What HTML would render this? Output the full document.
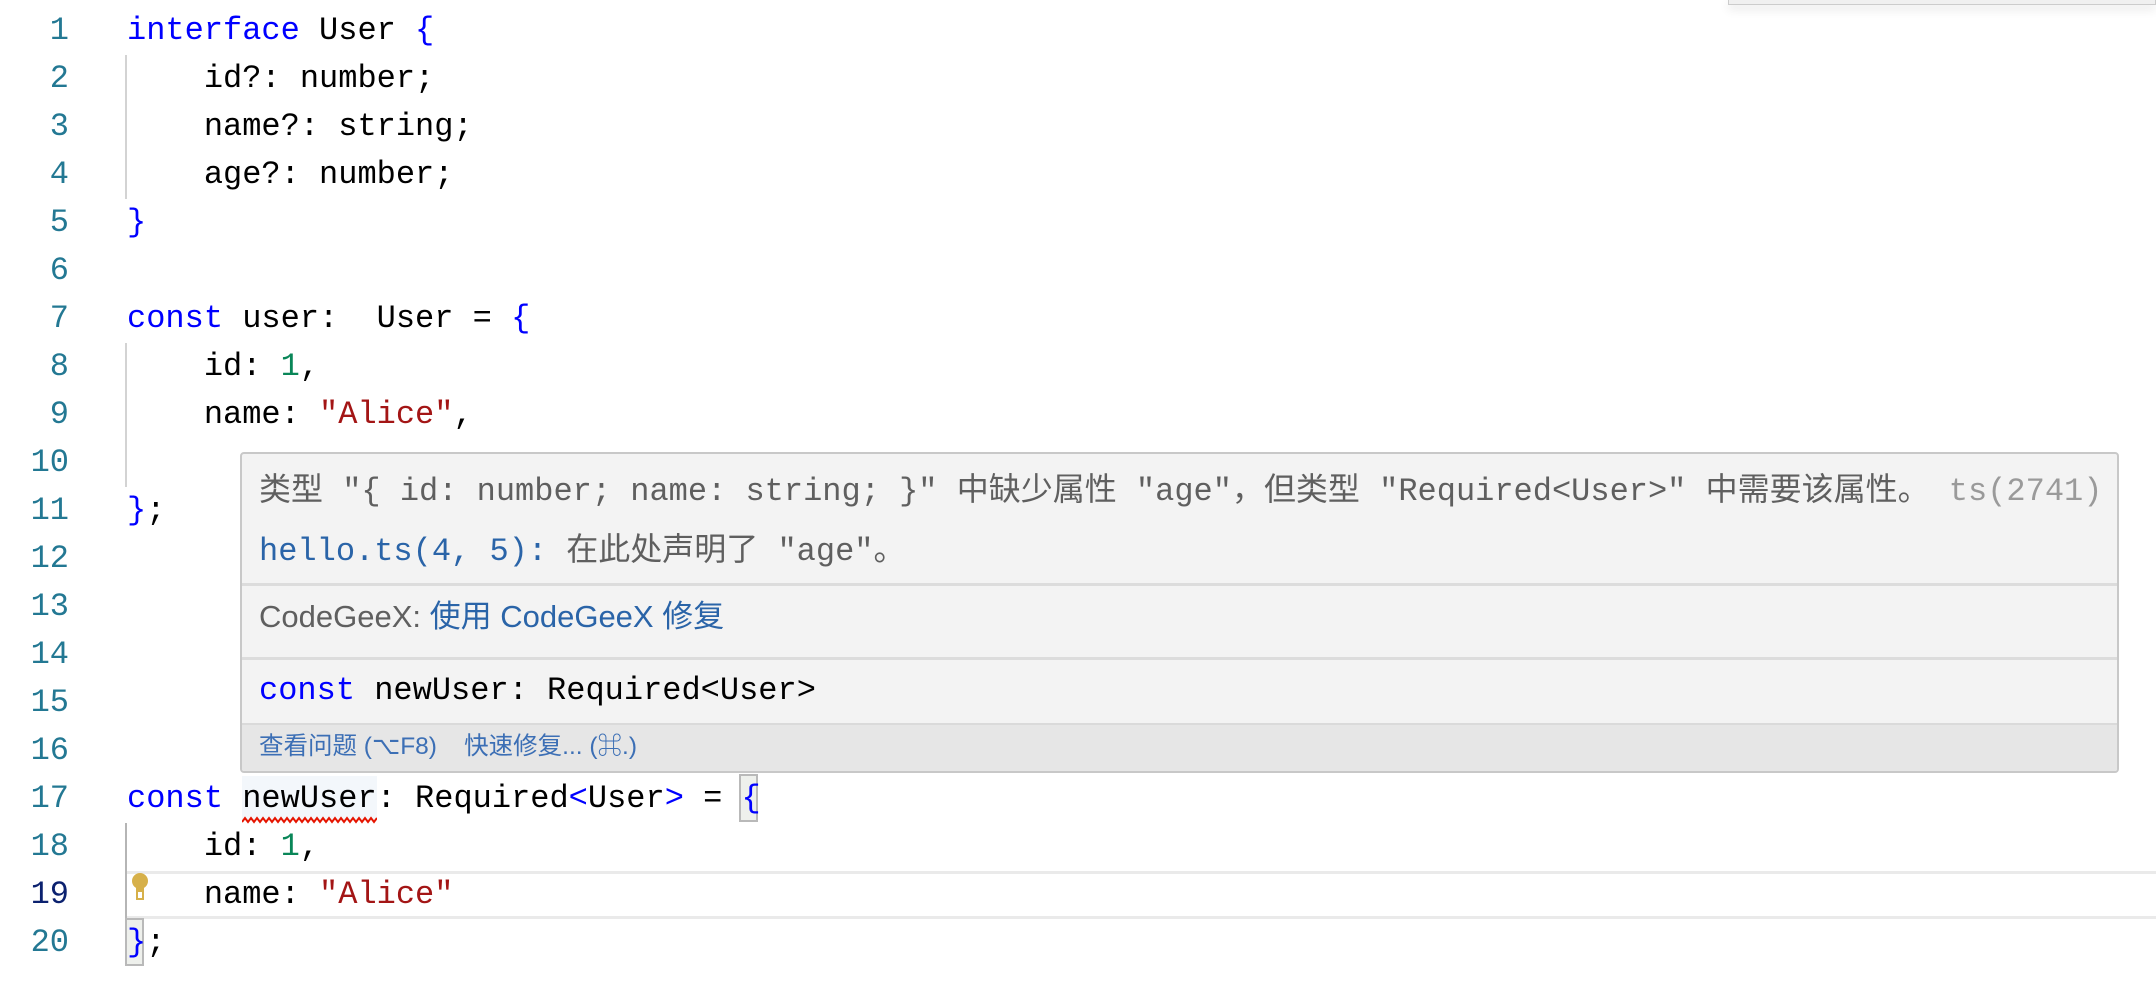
<!DOCTYPE html>
<html><head><meta charset="utf-8"><style>
*{margin:0;padding:0;box-sizing:border-box}
body{width:2156px;height:998px;background:#fff;position:relative;overflow:hidden;font-family:"Liberation Mono","Noto Sans CJK SC",monospace;font-size:32px}
.ln{position:absolute;left:0;width:69px;text-align:right;color:#237893;height:48px;line-height:48px}
.c{position:absolute;left:127px;height:48px;line-height:48px;white-space:pre;color:#000}
.k{color:#0000ff}.s{color:#a31515}.n{color:#098658}
.g{position:absolute;left:125px;width:2px;background:#d3d3d3}
.hv{position:absolute;left:240px;top:452px;width:1879px;height:321px;background:#f3f3f3;border:2px solid #c8c8c8;border-radius:4px;overflow:hidden}
.hv .r{position:absolute;left:17px;white-space:pre}
.hr{position:absolute;left:0;right:0;height:3px;background:#dcdcdc}
.sans{font-family:"Liberation Sans","Noto Sans CJK SC",sans-serif}
</style></head><body>
<div style="position:absolute;left:1728px;top:0;width:428px;height:5px;background:#f0f0f0;border:1px solid #ccc;border-top:none;box-shadow:0 4px 10px rgba(0,0,0,.12)"></div>

<div class="g" style="top:55px;height:144px"></div>
<div class="g" style="top:343px;height:144px"></div>
<div class="g" style="top:823px;height:96px;background:#b5b5b5"></div>

<div style="position:absolute;left:127px;right:0;top:871px;height:48px;border-top:3px solid #eaeaea;border-bottom:3px solid #eaeaea"></div>

<div class="ln" style="top:7px">1</div><div class="c" style="top:7px"><span class="k">interface</span> User <span class="k">{</span></div>
<div class="ln" style="top:55px">2</div><div class="c" style="top:55px">    id?: number;</div>
<div class="ln" style="top:103px">3</div><div class="c" style="top:103px">    name?: string;</div>
<div class="ln" style="top:151px">4</div><div class="c" style="top:151px">    age?: number;</div>
<div class="ln" style="top:199px">5</div><div class="c" style="top:199px"><span class="k">}</span></div>
<div class="ln" style="top:247px">6</div>
<div class="ln" style="top:295px">7</div><div class="c" style="top:295px"><span class="k">const</span> user:  User = <span class="k">{</span></div>
<div class="ln" style="top:343px">8</div><div class="c" style="top:343px">    id: <span class="n">1</span>,</div>
<div class="ln" style="top:391px">9</div><div class="c" style="top:391px">    name: <span class="s">"Alice"</span>,</div>
<div class="ln" style="top:439px">10</div>
<div class="ln" style="top:487px">11</div><div class="c" style="top:487px"><span class="k">}</span>;</div>
<div class="ln" style="top:535px">12</div>
<div class="ln" style="top:583px">13</div>
<div class="ln" style="top:631px">14</div>
<div class="ln" style="top:679px">15</div>
<div class="ln" style="top:727px">16</div>
<div style="position:absolute;left:242px;top:776px;width:135px;height:44px;background:#f3f7fb"></div>
<svg style="position:absolute;left:242px;top:816px" width="135" height="8"><polyline fill="none" stroke="#e51400" stroke-width="2" points="0,6 3,2 6,6 9,2 12,6 15,2 18,6 21,2 24,6 27,2 30,6 33,2 36,6 39,2 42,6 45,2 48,6 51,2 54,6 57,2 60,6 63,2 66,6 69,2 72,6 75,2 78,6 81,2 84,6 87,2 90,6 93,2 96,6 99,2 102,6 105,2 108,6 111,2 114,6 117,2 120,6 123,2 126,6 129,2 132,6 135,2"/></svg>
<div style="position:absolute;left:739px;top:774px;width:19px;height:48px;background:#eef0ec;border:2px solid #b9b9b9"></div>
<div style="position:absolute;left:125px;top:918px;width:19px;height:48px;background:#eef0ec;border:2px solid #b9b9b9"></div>
<div class="ln" style="top:775px">17</div><div class="c" style="top:775px"><span class="k">const</span> newUser: Required<span class="k">&lt;</span>User<span class="k">&gt;</span> = <span class="k">{</span></div>
<div class="ln" style="top:823px">18</div><div class="c" style="top:823px">    id: <span class="n">1</span>,</div>
<div class="ln" style="top:871px;color:#0b216f">19</div><div class="c" style="top:871px">    name: <span class="s">"Alice"</span></div>
<div class="ln" style="top:919px">20</div><div class="c" style="top:919px"><span class="k">}</span>;</div>
<svg style="position:absolute;left:131px;top:872px" width="20" height="30"><circle cx="9" cy="9" r="8" fill="#d6b04a"/><rect x="5" y="14" width="8" height="6" fill="#d6b04a"/><rect x="6" y="19" width="6" height="8" fill="#fff" stroke="#d6b04a" stroke-width="2"/></svg>

<div class="hv">
<div class="r" style="top:14px;line-height:48px;color:#5f5f5f">类型 "{ id: number; name: string; }" 中缺少属性 "age"，但类型 "Required&lt;User&gt;" 中需要该属性。 <span style="color:#9a9a9a">ts(2741)</span></div>
<div class="r" style="top:74px;line-height:48px;color:#5f5f5f"><span style="color:#2a64a8">hello.ts(4, 5):</span> 在此处声明了 "age"。</div>
<div class="hr" style="top:129px"></div>
<div class="r sans" style="top:139px;line-height:48px;font-size:31px;color:#5f5f5f">CodeGeeX: <span style="color:#2a64a8">使用 CodeGeeX 修复</span></div>
<div class="hr" style="top:203px"></div>
<div class="r" style="top:213px;line-height:48px;color:#000"><span class="k">const</span> newUser: Required&lt;User&gt;</div>
<div style="position:absolute;left:0;right:0;top:269px;bottom:0;background:#e6e6e6;border-top:2px solid #dadada"></div>
<div class="r sans" style="top:273px;line-height:40px;font-size:24.5px;color:#3c6fb5">查看问题 (⌥F8)&nbsp;&nbsp;&nbsp;&nbsp;快速修复... (⌘.)</div>
</div>
</body></html>
